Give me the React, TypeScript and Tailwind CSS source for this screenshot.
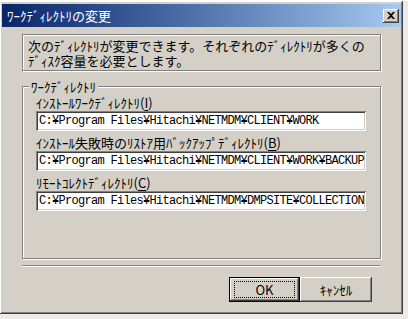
import React from "react";

const jp = "font-['Noto_Sans_CJK_JP',sans-serif]";
const mono = "font-['Liberation_Mono',monospace]";

function Field({ value }: { value: string }) {
  return (
    <div
      className={`ml-[13px] flex h-[20px] w-[330px] items-center overflow-hidden bg-white pl-[3px] text-[12px] tracking-[-0.7px] text-black ${mono} shadow-[inset_1px_1px_#808080,inset_-1px_-1px_#ffffff,inset_2px_2px_#404040,inset_-2px_-2px_#d4d0c8]`}
    >
      <span className="whitespace-nowrap">{value}</span>
    </div>
  );
}

function Label({ text, mnemonic }: { text: string; mnemonic: string }) {
  return (
    <div className="ml-[13px] flex h-[20px] items-center pt-[2px] text-[13px] leading-none text-black">
      {text}(<span className="underline underline-offset-2">{mnemonic}</span>)
    </div>
  );
}

export default function App() {
  return (
    <div className={`h-[319px] w-[408px] bg-[#ecebe8] ${jp}`}>
      <div className="ml-0 mt-[1px] flex h-[313px] w-[403px] flex-col bg-[#d4d0c8] px-[2px] pt-[3px] shadow-[inset_-1px_-1px_#404040,inset_1px_1px_#ffffff,inset_-2px_-2px_#808080]">
        {/* title bar */}
        <div className="flex h-[23px] items-center justify-between bg-gradient-to-r from-[#0a246a] to-[#a6caf0] pl-[5px] pr-[2px]">
          <span className="text-[13px] leading-none text-white">ﾜｰｸﾃﾞｨﾚｸﾄﾘの変更</span>
          <div className="flex h-[14px] w-[16px] items-center justify-center bg-[#d4d0c8] shadow-[inset_-1px_-1px_#404040,inset_1px_1px_#ffffff,inset_-2px_-2px_#808080]">
            <svg width="8" height="7" viewBox="0 0 8 7">
              <path d="M0 0h2l2 2 2-2h2L5 3.5 8 7H6L4 5 2 7H0l3-3.5z" fill="#000" />
            </svg>
          </div>
        </div>

        {/* message */}
        <div className="ml-[20px] mt-[7px] flex h-[37px] w-[359px] flex-col border border-[#808080] px-[5px] pt-[3px] text-[13px] leading-none text-black shadow-[inset_1px_1px_#ffffff,1px_1px_#ffffff]">
          <p className="h-[15px] leading-[15px]">次のﾃﾞｨﾚｸﾄﾘが変更できます。それぞれのﾃﾞｨﾚｸﾄﾘが多くの</p>
          <p className="h-[15px] leading-[15px]">ﾃﾞｨｽｸ容量を必要とします。</p>
        </div>

        {/* group */}
        <div className="relative ml-[20px] mt-[15px] h-[173px] w-[359px] border border-[#808080] pt-[4px] shadow-[inset_1px_1px_#ffffff,1px_1px_#ffffff]">
          <span className="absolute left-[6px] top-[-7px] bg-[#d4d0c8] px-[2px] text-[13px] leading-[13px] text-black">
            ﾜｰｸﾃﾞｨﾚｸﾄﾘ
          </span>
          <div className="flex flex-col">
            <Label text="ｲﾝｽﾄｰﾙﾜｰｸﾃﾞｨﾚｸﾄﾘ" mnemonic="I" />
            <Field value="C:¥Program Files¥Hitachi¥NETMDM¥CLIENT¥WORK" />
            <Label text="ｲﾝｽﾄｰﾙ失敗時のﾘｽﾄｱ用ﾊﾞｯｸｱｯﾌﾟﾃﾞｨﾚｸﾄﾘ" mnemonic="B" />
            <Field value="C:¥Program Files¥Hitachi¥NETMDM¥CLIENT¥WORK¥BACKUP" />
            <Label text="ﾘﾓｰﾄｺﾚｸﾄﾃﾞｨﾚｸﾄﾘ" mnemonic="C" />
            <Field value="C:¥Program Files¥Hitachi¥NETMDM¥DMPSITE¥COLLECTION" />
          </div>
        </div>

        {/* separator */}
        <div className="ml-[20px] mt-[6px] h-[2px] w-[358px] border-t border-b border-t-[#808080] border-b-white" />

        {/* buttons */}
        <div className="ml-[227px] mt-[10px] flex text-[13px] text-black">
          <div className="flex h-[25px] w-[71px] items-center justify-center border border-black bg-[#d4d0c8] shadow-[inset_-1px_-1px_#404040,inset_1px_1px_#ffffff,inset_-2px_-2px_#808080]">
            <div className="flex h-[17px] w-[61px] items-center justify-center border border-dotted border-black leading-none">
              OK
            </div>
          </div>
          <div className="flex h-[25px] w-[72px] items-center justify-center bg-[#d4d0c8] leading-none shadow-[inset_-1px_-1px_#404040,inset_1px_1px_#ffffff,inset_-2px_-2px_#808080]">
            ｷｬﾝｾﾙ
          </div>
        </div>
      </div>
    </div>
  );
}
